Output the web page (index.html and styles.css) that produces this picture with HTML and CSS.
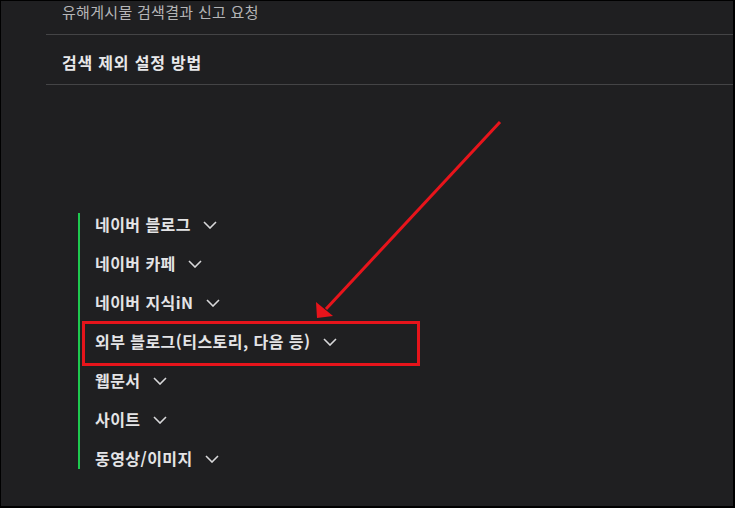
FILE: index.html
```html
<!DOCTYPE html>
<html lang="ko">
<head>
<meta charset="utf-8">
<link rel="stylesheet" href="styles.css">
</head>
<body>
<div class="frame">
  <div class="menu">
    <div class="menu-row first">유해게시물 검색결과 신고 요청</div>
    <div class="menu-row title">검색 제외 설정 방법</div>
  </div>
  <ul class="types">
    <li class="item"><span>네이버 블로그</span><svg class="chev" viewBox="0 0 14 8"><polyline points="1,1 7,7 13,1"/></svg></li>
    <li class="item"><span>네이버 카페</span><svg class="chev" viewBox="0 0 14 8"><polyline points="1,1 7,7 13,1"/></svg></li>
    <li class="item"><span>네이버 지식iN</span><svg class="chev" viewBox="0 0 14 8"><polyline points="1,1 7,7 13,1"/></svg></li>
    <li class="item marked"><span class="highlight"></span><span>외부 블로그(티스토리, 다음 등)</span><svg class="chev" viewBox="0 0 14 8"><polyline points="1,1 7,7 13,1"/></svg></li>
    <li class="item"><span>웹문서</span><svg class="chev" viewBox="0 0 14 8"><polyline points="1,1 7,7 13,1"/></svg></li>
    <li class="item"><span>사이트</span><svg class="chev" viewBox="0 0 14 8"><polyline points="1,1 7,7 13,1"/></svg></li>
    <li class="item"><span>동영상/이미지</span><svg class="chev" viewBox="0 0 14 8"><polyline points="1,1 7,7 13,1"/></svg></li>
  </ul>
  <svg class="arrow" width="735" height="508" viewBox="0 0 735 508">
    <line x1="500" y1="122" x2="326" y2="309"/>
    <polygon points="317,318 316,302 333,316"/>
  </svg>
</div>
</body>
</html>
```

FILE: styles.css
```css
html, body {
  margin: 0;
  padding: 0;
  background: #000;
}
body {
  font-family: "Noto Sans CJK KR", "Noto Sans", sans-serif;
}
.frame {
  position: relative;
  width: 732px;
  height: 505px;
  margin: 1px 2px 2px 1px;
  background: #1f1f21;
  overflow: hidden;
}
.menu {
  margin-left: 45px;
}
.menu-row {
  padding-left: 16px;
  line-height: 22px;
  border-bottom: 1px solid #444446;
}
.menu-row.first {
  height: 22px;
  padding-bottom: 11px;
  font-size: 15px;
  letter-spacing: 0.3px;
  color: #b5b5b7;
}
.menu-row.title {
  padding-top: 16px;
  padding-bottom: 11px;
  font-size: 16px;
  letter-spacing: 0.8px;
  font-weight: 700;
  color: #e8e8ea;
}
.types {
  list-style: none;
  margin: 128px 0 0 77px;
  padding: 0 0 0 15px;
  border-left: 2px solid #1ec84f;
  display: flex;
  flex-direction: column;
  gap: 17px;
}
.item {
  position: relative;
  display: flex;
  align-items: center;
  gap: 12px;
  height: 22px;
  font-size: 16px;
  letter-spacing: 0.45px;
  font-weight: 700;
  color: #e4e4e6;
}
.chev {
  width: 14px;
  height: 8px;
  margin-top: 2px;
}
.chev polyline {
  fill: none;
  stroke: #d8d8da;
  stroke-width: 1.6;
}
.highlight {
  position: absolute;
  left: -13px;
  top: -9px;
  width: 332px;
  height: 39px;
  border: 3px solid #e6141b;
}
.arrow {
  position: absolute;
  left: -1px;
  top: -1px;
}
.arrow line {
  stroke: #e8141b;
  stroke-width: 3;
}
.arrow polygon {
  fill: #e8141b;
}
```
